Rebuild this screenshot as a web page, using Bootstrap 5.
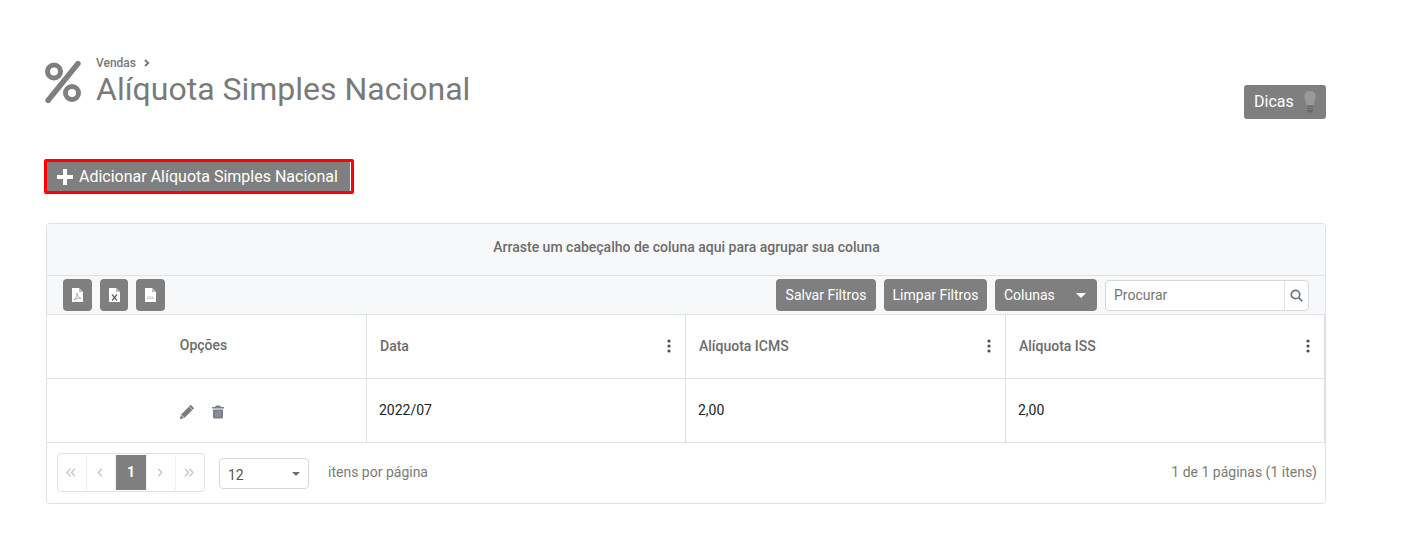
<!DOCTYPE html>
<html lang="pt-BR">
<head>
<meta charset="utf-8">
<title>Alíquota Simples Nacional</title>
<link href="https://cdn.jsdelivr.net/npm/bootstrap@5.3.0/dist/css/bootstrap.min.css" rel="stylesheet">
<style>
html,body{height:551px;overflow:hidden}
body{font-family:Roboto,"Liberation Sans",sans-serif;background:#fff;color:#212529;font-size:14px}
.page-wrap{padding:56px 84px 0 46px}
.head-row{height:63px}
.pct-ico{width:36px;height:42px;margin-top:5px;margin-left:-1px;margin-right:15px;flex:none}
.crumb{font-size:12px;line-height:14px;color:#777;font-weight:500}
.crumb svg{margin-left:8px;vertical-align:0}
.page-ttl{font-size:32px;line-height:38px;color:#7a7a7a;font-weight:400;margin:0}
.tips-btn{background:#7f7f7f;color:#fff;height:34px;width:82px;border-radius:3px;margin-top:29px;font-size:16px;padding:0 0 0 10px;border:0;gap:10px}
.add-outline{border:3px solid #f00;border-radius:2px;width:310px;height:35px;margin:40px 0 0 -2px;background:#fff;padding:0 1px 0 0;display:block}
.add-inner{background:#7f7f7f;color:#fff;height:100%;font-size:16px;padding:0 0 0 10px;gap:6px}
.grid-box{border:1px solid #dee2e6;border-radius:4px;margin-top:29px;height:281px;overflow:hidden}
.group-bar{height:52px;background:#f7f8fa;border-bottom:1px solid #dee2e6;color:#6c6c6c;font-weight:500;font-size:14px;padding:0 0 5px 1px}
.tool-bar{height:39px;background:#f7f8fa;padding:0 16px;border-bottom:1px solid #dee2e6}
.file-btn{width:29px;height:32px;border-radius:4px;background:#7f7f7f;padding:0;border:0;margin-right:8px}
.file-mid{width:28px}
.file-btn:last-of-type{margin-right:0}
.gray-btn{background:#7f7f7f;color:#fff;height:32px;border-radius:4px;font-size:14px;padding:0;border:0;margin-right:8px}
.btn-save{width:100px}
.btn-clear{width:103px}
.col-btn{width:102px;justify-content:space-between;padding:0 11px 0 9px}
.caret-dn{width:0;height:0;border-left:5px solid transparent;border-right:5px solid transparent;border-top:5px solid currentColor}
.search-box{width:204px;height:31px;border:1px solid #d5d9dd;border-radius:4px;background:#fff;overflow:hidden}
.search-txt{flex:1;padding-left:8px;color:#757575;font-size:14px;line-height:29px;border-right:1px solid #dee2e6}
.search-ico{width:23px}
.head-cells{height:64px;border-bottom:1px solid #dee2e6}
.body-cells{height:64px;border-bottom:1px solid #dee2e6}
.cell{width:320px;border-right:1px solid #dee2e6;padding:0 12px;height:100%}
.cell-narrow{width:319px}
.th-txt{color:#6c6c6c;font-weight:500;font-size:14px;padding:0 13px}
.th-opt{padding:0 18px 2px 12px}
.td-txt{color:#212529;font-size:14px;padding-bottom:1px}
.td-act{padding:3px 22px 0 12px;gap:17px}
.dots-ico{margin-right:1px;margin-top:-2px}
.foot-bar{height:60px;padding:0 8px 2px 10px;color:#7a7a7a;font-size:14px}
.pager-box{border:1px solid #dee2e6;border-radius:4px;height:39px;width:148px;overflow:hidden;color:#c4c6c9;padding:1px 0}
.pg-item{flex:1;height:100%;border-right:1px solid #eef0f1;padding-right:3px}
.pg-item:last-child{border-right:0}
.pg-on{background:#7f7f7f;color:#fff;font-weight:700;font-size:14px;flex:none;width:31px;padding:0}
.size-pick{width:90px;height:31px;border:1px solid #d5d9dd;border-radius:4px;margin-left:14px;margin-top:3px;padding:3px 8px 0 8px;color:#555;font-size:14px}
.size-pick .caret-dn{border-left-width:4.5px;border-right-width:4.5px;border-top-width:4px;color:#6c6c6c;margin-top:-3px}
.per-page{margin-left:19px}
</style>
</head>
<body>
<main class="page-wrap">
  <div class="d-flex justify-content-between head-row">
    <div class="d-flex">
      <svg class="pct-ico" viewBox="0 0 36 42" fill="none" stroke="#7f7f7f" aria-hidden="true">
        <circle cx="9" cy="10.5" r="6.5" stroke-width="5"/>
        <circle cx="27" cy="32" r="6.5" stroke-width="5"/>
        <path d="M33 2.5 3 39.5" stroke-width="5.4" stroke-linecap="round"/>
      </svg>
      <div>
        <div class="crumb">Vendas<svg width="6" height="8" viewBox="0 0 6 8" fill="none" stroke="#6f6f6f" stroke-width="1.8"><path d="m1 .8 3.200 3.200L1 7.200"/></svg></div>
        <h1 class="page-ttl">Alíquota Simples Nacional</h1>
      </div>
    </div>
    <button type="button" class="btn tips-btn d-flex align-items-center">Dicas
      <svg width="12" height="22" viewBox="0 0 12 22" aria-hidden="true"><path d="M6 .3C2.400.3.400 2.300.400 5.600c0 3.400 1.700 5 2.300 8.900h6.600c.6-3.900 2.300-5.500 2.300-8.900C11.600 2.300 9.600.3 6 .3z" fill="#9a9a9a"/><path d="M2.900 14.500h6.200v5l-1.500 2H4.400l-1.500-2z" fill="#666"/><path d="M2.900 16.500h6.200M2.900 18.500h6.200" stroke="#8a8a8a" stroke-width=".7"/></svg>
    </button>
  </div>

  <div class="add-outline">
    <div class="add-inner d-flex align-items-center">
      <svg width="16" height="16" viewBox="0 0 16 16" aria-hidden="true"><path d="M6 0h4v6h6v4h-6v6H6v-6H0V6h6z" fill="#fff"/></svg>
      <span>Adicionar Alíquota Simples Nacional</span>
    </div>
  </div>

  <section class="grid-box">
    <div class="group-bar d-flex align-items-center justify-content-center">Arraste um cabeçalho de coluna aqui para agrupar sua coluna</div>
    <div class="tool-bar d-flex align-items-center justify-content-between">
      <div class="d-flex">
        <button type="button" class="btn file-btn d-flex align-items-center justify-content-center" aria-label="PDF">
          <svg width="11" height="14" viewBox="0 0 11 14"><path d="M0 0h7l4 4v10H0z" fill="#fff"/><path d="M7 0v4h4" fill="#bbb"/><path d="M5 5c.5 3-1 5-3 7 2-1.500 5-2 7-1.500C7 10 5.500 8 5 5z" fill="none" stroke="#999" stroke-width=".8"/></svg>
        </button>
        <button type="button" class="btn file-btn file-mid d-flex align-items-center justify-content-center" aria-label="Excel">
          <svg width="11" height="14" viewBox="0 0 11 14"><path d="M0 0h7l4 4v10H0z" fill="#fff"/><path d="M7 0v4h4" fill="#bbb"/><path d="m3 6.500 5 6M8 6.500l-5 6" stroke="#666" stroke-width="1.300"/></svg>
        </button>
        <button type="button" class="btn file-btn d-flex align-items-center justify-content-center" aria-label="CSV">
          <svg width="11" height="14" viewBox="0 0 11 14"><path d="M0 0h7l4 4v10H0z" fill="#fff"/><path d="M7 0v4h4" fill="#bbb"/><path d="M2 9h7M2 10.500h7" stroke="#aaa" stroke-width=".8" stroke-dasharray="1.500 .7"/></svg>
        </button>
      </div>
      <div class="d-flex align-items-center">
        <button type="button" class="btn gray-btn btn-save">Salvar Filtros</button>
        <button type="button" class="btn gray-btn btn-clear">Limpar Filtros</button>
        <button type="button" class="btn gray-btn col-btn d-flex align-items-center">Colunas<span class="caret-dn"></span></button>
        <div class="search-box d-flex">
          <div class="search-txt">Procurar</div>
          <div class="search-ico d-flex align-items-center justify-content-center">
            <svg width="13" height="13" viewBox="0 0 13 13" fill="none" stroke="#6c757d" stroke-width="1.700"><circle cx="5.500" cy="5.500" r="4.200"/><path d="m8.700 8.700 3.600 3.600"/></svg>
          </div>
        </div>
      </div>
    </div>
    <div class="head-cells d-flex">
      <div class="cell d-flex align-items-center justify-content-center th-txt th-opt">Opções</div>
      <div class="cell cell-narrow d-flex align-items-center justify-content-between th-txt">Data<svg class="dots-ico" width="4" height="14" viewBox="0 0 4 14" fill="#495057"><circle cx="2" cy="2" r="1.600"/><circle cx="2" cy="7" r="1.600"/><circle cx="2" cy="12" r="1.600"/></svg></div>
      <div class="cell d-flex align-items-center justify-content-between th-txt">Alíquota ICMS<svg class="dots-ico" width="4" height="14" viewBox="0 0 4 14" fill="#495057"><circle cx="2" cy="2" r="1.600"/><circle cx="2" cy="7" r="1.600"/><circle cx="2" cy="12" r="1.600"/></svg></div>
      <div class="cell cell-narrow d-flex align-items-center justify-content-between th-txt">Alíquota ISS<svg class="dots-ico" width="4" height="14" viewBox="0 0 4 14" fill="#495057"><circle cx="2" cy="2" r="1.600"/><circle cx="2" cy="7" r="1.600"/><circle cx="2" cy="12" r="1.600"/></svg></div>
    </div>
    <div class="body-cells d-flex">
      <div class="cell td-act d-flex align-items-center justify-content-center">
        <svg width="16" height="16" viewBox="0 0 15 15" aria-hidden="true"><path d="M11 .8 14.200 4 5 13.200.8 14.200 1.800 10z" fill="#7a7a7a"/><path d="M1.800 10 5 13.200" stroke="#fff" stroke-width=".8"/><path d="m9.500 2.500 3 3" stroke="#fff" stroke-width=".7"/></svg>
        <svg width="12" height="14" viewBox="0 0 12 13" aria-hidden="true"><path d="M4 0h4l1 1.500h3v1.500H0V1.500h3zM1 4h10v7.500q0 1.500-1.500 1.500h-7Q1 13 1 11.500z" fill="#7a7f8a"/><path d="M4 5.500v5.500M6 5.500v5.500M8 5.500v5.500" stroke="#9aa3b5" stroke-width=".9"/></svg>
      </div>
      <div class="cell cell-narrow d-flex align-items-center td-txt">2022/07</div>
      <div class="cell d-flex align-items-center td-txt">2,00</div>
      <div class="cell cell-narrow d-flex align-items-center td-txt">2,00</div>
    </div>
    <div class="foot-bar d-flex align-items-center justify-content-between">
      <div class="d-flex align-items-center">
        <div class="pager-box d-flex">
          <div class="pg-item d-flex align-items-center justify-content-center" aria-label="Primeira"><svg width="10" height="9" viewBox="0 0 10 9" fill="none" stroke="currentColor" stroke-width="1.300"><path d="M4.500.7.900 4.500l3.600 3.800M9 .7 5.400 4.500 9 8.300"/></svg></div>
          <div class="pg-item d-flex align-items-center justify-content-center" aria-label="Anterior"><svg width="6" height="9" viewBox="0 0 6 9" fill="none" stroke="currentColor" stroke-width="1.300"><path d="M4.800.7 1.200 4.500l3.600 3.800"/></svg></div>
          <div class="pg-item pg-on d-flex align-items-center justify-content-center">1</div>
          <div class="pg-item d-flex align-items-center justify-content-center" aria-label="Próxima"><svg width="6" height="9" viewBox="0 0 6 9" fill="none" stroke="currentColor" stroke-width="1.300"><path d="m1.200.7 3.600 3.800-3.600 3.800"/></svg></div>
          <div class="pg-item d-flex align-items-center justify-content-center" aria-label="Última"><svg width="10" height="9" viewBox="0 0 10 9" fill="none" stroke="currentColor" stroke-width="1.300"><path d="m1 .7 3.600 3.800L1 8.300M5.500.7l3.600 3.800-3.600 3.800"/></svg></div>
        </div>
        <div class="size-pick d-flex align-items-center justify-content-between">12<span class="caret-dn"></span></div>
        <span class="per-page">itens por página</span>
      </div>
      <span>1 de 1 páginas (1 itens)</span>
    </div>
  </section>
</main>
<script src="https://cdn.jsdelivr.net/npm/bootstrap@5.3.0/dist/js/bootstrap.bundle.min.js"></script>
</body>
</html>
